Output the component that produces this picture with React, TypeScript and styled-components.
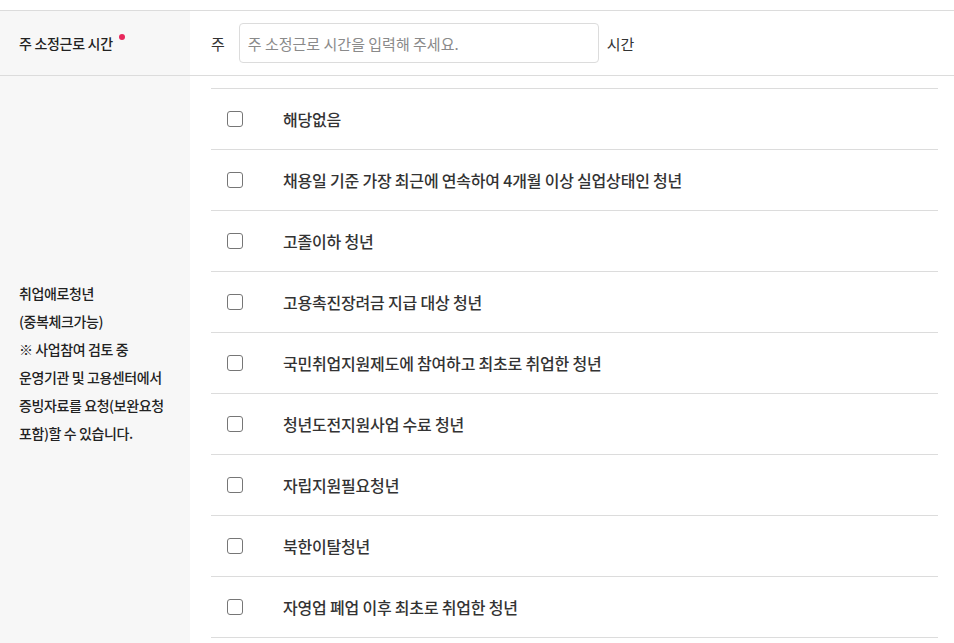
import React from "react";
import styled, { createGlobalStyle } from "styled-components";

const GlobalStyle = createGlobalStyle`
  html, body {
    margin: 0;
    padding: 0;
    background: #fff;
  }
  body {
    font-family: "Noto Sans CJK KR", "Noto Sans", sans-serif;
    color: #333;
  }
`;

const Page = styled.div`
  padding-top: 10px;
`;

const Table = styled.div`
  display: grid;
  grid-template-columns: 190px 1fr;
  border-top: 1px solid #dcdcdc;
`;

const Th = styled.div`
  background: #f7f7f7;
  padding: 0 19px;
  font-size: 14px;
  letter-spacing: -0.3px;
  font-weight: 500;
  color: #222;
  display: flex;
  align-items: center;
  border-bottom: 1px solid #dcdcdc;
`;

const Td = styled.div<{ $list?: boolean }>`
  border-bottom: 1px solid #dcdcdc;
  padding: ${(p) => (p.$list ? "12px 16px 12px 21px" : "0 21px")};
  display: flex;
  align-items: ${(p) => (p.$list ? "stretch" : "center")};
  min-height: ${(p) => (p.$list ? "auto" : "65px")};
  box-sizing: border-box;
`;

const Required = styled.span`
  position: relative;
  &::after {
    content: "";
    position: absolute;
    top: 1px;
    right: -12px;
    width: 6px;
    height: 6px;
    border-radius: 50%;
    background: #e8285c;
  }
`;

const Unit = styled.span`
  font-size: 15px;
  color: #333;
`;

const HoursInput = styled.input`
  width: 360px;
  height: 40px;
  box-sizing: border-box;
  margin: 0 8px 0 14px;
  padding: 0 8px;
  border: 1px solid #dcdcdc;
  border-radius: 4px;
  font-family: inherit;
  font-size: 15px;
  color: #333;
  outline: none;
  &::placeholder {
    color: #8a8a8a;
  }
`;

const Note = styled.div`
  font-size: 14px;
  letter-spacing: -0.4px;
  line-height: 28px;
`;

const List = styled.ul`
  list-style: none;
  margin: 0;
  padding: 0;
  width: 100%;
  border-top: 1px solid #dcdcdc;
`;

const Item = styled.li`
  display: flex;
  align-items: center;
  height: 60px;
  border-bottom: 1px solid #dcdcdc;
  padding-left: 16px;
`;

const Box = styled.span`
  width: 16px;
  height: 16px;
  box-sizing: border-box;
  border: 1.5px solid #767676;
  border-radius: 3px;
  background: #fff;
  flex-shrink: 0;
  margin-right: 40px;
`;

const ItemText = styled.span`
  font-size: 16px;
  letter-spacing: -0.2px;
  font-weight: 500;
  color: #333;
`;

const options = [
  "해당없음",
  "채용일 기준 가장 최근에 연속하여 4개월 이상 실업상태인 청년",
  "고졸이하 청년",
  "고용촉진장려금 지급 대상 청년",
  "국민취업지원제도에 참여하고 최초로 취업한 청년",
  "청년도전지원사업 수료 청년",
  "자립지원필요청년",
  "북한이탈청년",
  "자영업 폐업 이후 최초로 취업한 청년",
];

const App = () => {
  return (
    <Page>
      <GlobalStyle />
      <Table>
        <Th>
          <Required>주 소정근로 시간</Required>
        </Th>
        <Td>
          <Unit>주</Unit>
          <HoursInput placeholder="주 소정근로 시간을 입력해 주세요." />
          <Unit>시간</Unit>
        </Td>
        <Th>
          <Note>
            취업애로청년
            <br />
            (중복체크가능)
            <br />※ 사업참여 검토 중
            <br />
            운영기관 및 고용센터에서
            <br />
            증빙자료를 요청(보완요청
            <br />
            포함)할 수 있습니다.
          </Note>
        </Th>
        <Td $list>
          <List>
            {options.map((o) => (
              <Item key={o}>
                <Box />
                <ItemText>{o}</ItemText>
              </Item>
            ))}
          </List>
        </Td>
      </Table>
    </Page>
  );
};

export default App;
